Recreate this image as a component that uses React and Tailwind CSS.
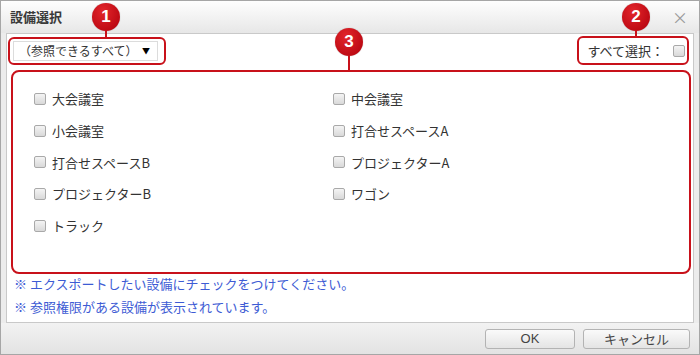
import React from 'react';

const items = [
  ['大会議室', '中会議室'],
  ['小会議室', '打合せスペースA'],
  ['打合せスペースB', 'プロジェクターA'],
  ['プロジェクターB', 'ワゴン'],
  ['トラック', null],
];

function Box() {
  return (
    <span className="inline-block w-[12px] h-[12px] rounded-[2px] border border-[#a9a9a9] bg-linear-to-b from-[#f4f4f4] to-[#d9d9d9] shrink-0" />
  );
}

function Badge({ n, className }) {
  return (
    <div className={'absolute flex flex-col items-center ' + className}>
      <div className="w-[28px] h-[28px] rounded-full bg-radial-[at_40%_30%] from-[#e2252b] to-[#b0000b] flex items-center justify-center text-white text-[17px] font-bold font-['Liberation_Sans',sans-serif] shadow-[0_0_1px_rgba(0,0,0,0.4)]">
        {n}
      </div>
    </div>
  );
}

export default function App() {
  return (
    <div className="relative w-[700px] h-[355px] border border-[#a6a6a6] bg-[#ececec] flex flex-col font-['Noto_Sans_CJK_JP',sans-serif] text-[#333] overflow-hidden">
      {/* title bar */}
      <div className="h-[32px] shrink-0 flex items-center justify-between px-[9px] bg-linear-to-b from-[#fefefe] to-[#e7e7e7]">
        <span className="text-[13px] font-bold text-[#3a3a3a]">設備選択</span>
        <span className="text-[#9a9a9a] text-[16px] leading-none mr-[2px]">×</span>
      </div>

      {/* content panel */}
      <div className="mx-[5px] h-[290px] shrink-0 border border-[#c9c9c9] bg-white px-[1px] pt-[2px] text-[13px]">
        <div className="flex justify-between items-center">
          <div className="w-[158px] h-[28px] border-2 border-[#c8111a] rounded-[6px] flex items-center pl-[3px]">
            <div className="w-[145px] h-[20px] border border-[#dcdcdc] flex items-center justify-between pl-[5px] pr-[7px]">
              <span className="text-[12px] text-[#333]">（参照できるすべて）</span>
              <span className="text-[8px] text-black">▼</span>
            </div>
          </div>
          <div className="w-[112px] h-[29px] border-2 border-[#c8111a] rounded-[6px] flex items-center justify-end gap-[9px] pr-[2px] mr-[3px]">
            <span className="text-[13px]">すべて選択：</span>
            <Box />
          </div>
        </div>

        <div className="ml-[3px] mt-[5px] w-[680px] h-[204px] border-2 border-[#c8111a] rounded-[8px] pl-[21px] pt-[11px]">
          <div className="grid grid-cols-[299px_1fr]">
            {items.map((row, i) => (
              <React.Fragment key={i}>
                {row.map((label, j) =>
                  label ? (
                    <div key={j} className="h-[31.75px] flex items-center gap-[6px]">
                      <Box />
                      <span>{label}</span>
                    </div>
                  ) : (
                    <div key={j} />
                  )
                )}
              </React.Fragment>
            ))}
          </div>
        </div>

        <div className="pl-[6px] text-[13px] text-[#3d5bd4] leading-[23px] -mt-[2px]">
          <div>※ エクスポートしたい設備にチェックをつけてください。</div>
          <div>※ 参照権限がある設備が表示されています。</div>
        </div>
      </div>

      {/* footer */}
      <div className="flex-1 flex items-center justify-end gap-[8px] pr-[9px] bg-linear-to-b from-[#f2f2f2] to-[#e3e3e3]">
        <button className="w-[90px] h-[20px] border border-[#b3b3b3] rounded-[3px] bg-linear-to-b from-[#fafafa] to-[#e4e4e4] text-[13px] text-[#444] font-['Liberation_Sans',sans-serif] leading-none">
          OK
        </button>
        <button className="w-[107px] h-[20px] border border-[#b3b3b3] rounded-[3px] bg-linear-to-b from-[#fafafa] to-[#e4e4e4] text-[13px] text-[#444] leading-none">
          キャンセル
        </button>
      </div>

      {/* annotation markers */}
      <Badge n="1" className="left-[91px] top-[2px]" />
      <div className="absolute left-[104px] top-[29px] w-[2px] h-[8px] bg-[#c8111a]" />
      <Badge n="2" className="left-[621px] top-[2px]" />
      <div className="absolute left-[634px] top-[29px] w-[2px] h-[8px] bg-[#c8111a]" />
      <Badge n="3" className="left-[334px] top-[27px]" />
      <div className="absolute left-[347px] top-[54px] w-[2px] h-[16px] bg-[#c8111a]" />
    </div>
  );
}
